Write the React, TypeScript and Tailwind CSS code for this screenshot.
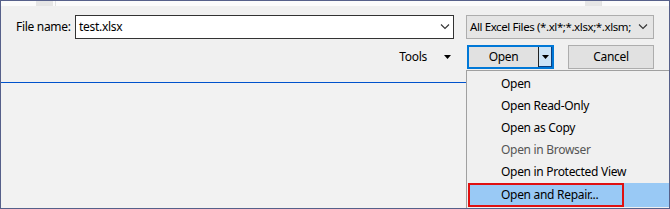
import React from "react";

const Chevron = () => (
  <svg width="10" height="6" viewBox="0 0 10 6" className="shrink-0">
    <path d="M1 0.5 L5 4.5 L9 0.5" fill="none" stroke="#333" strokeWidth="1.1" />
  </svg>
);

const Tri = ({ w = 7 }: { w?: number }) => (
  <svg width={w} height="4" viewBox="0 0 7 4" className="shrink-0">
    <path d="M0 0 H7 L3.5 4 Z" fill="#000" />
  </svg>
);

const items = [
  { t: "Open", dim: false },
  { t: "Open Read-Only", dim: false },
  { t: "Open as Copy", dim: false },
  { t: "Open in Browser", dim: true },
  { t: "Open in Protected View", dim: false },
];

export default function App() {
  return (
    <div className="relative w-[670px] h-[209px] border border-[#56608a] flex flex-col font-['Noto_Sans',sans-serif] text-[12px] tracking-[-0.3px] text-black leading-none overflow-hidden">
      {/* top strip */}
      <div className="h-[5px] bg-[#fbfbfb] flex">
        <div className="ml-[35px] w-[17px] bg-[#e6e6e6]" />
        <div className="ml-[2px] w-px bg-[#e2e2e2]" />
        <div className="ml-[529px] w-[16px] bg-[#e6e6e6]" />
        <div className="w-px bg-[#e2e2e2]" />
      </div>
      {/* panel */}
      <div className="h-[76px] bg-[#f0f0f0] pt-[9px] pl-[15px] pr-[15px] flex flex-col gap-[6px]">
        <div className="flex items-center h-[24px]">
          <div className="w-[59px]">File name:</div>
          <div className="w-[379px] h-[24px] bg-white border border-[#333] flex items-center pl-[3px] pr-[3px]">
            <span className="flex-1">test.xlsx</span>
            <Chevron />
          </div>
          <div className="ml-[12px] w-[188px] h-[24px] bg-[#e5e5e5] border border-[#adadad] flex items-center pl-[3px] pr-[5px]">
            <span className="shrink-0 whitespace-nowrap text-[11.5px] tracking-[-0.4px]">All Excel Files (*.xl*;*.xlsx;*.xlsm;</span>
            <span className="ml-auto"><Chevron /></span>
          </div>
        </div>
        <div className="flex items-center justify-end h-[24px]">
          <div className="flex items-center gap-[17px] mr-[16px]">
            <span>Tools</span>
            <Tri />
          </div>
          <div className="w-[87px] h-[24px] border-2 border-[#0078d7] bg-[#e1e1e1] flex">
            <div className="flex-1 flex items-center justify-center">Open</div>
            <div className="w-px bg-[#222]" />
            <div className="w-[13px] bg-[#cce4f7] border-r border-b border-[#0a3f80] flex items-center justify-center">
              <Tri w={7} />
            </div>
          </div>
          <div className="ml-[14px] w-[86px] h-[24px] bg-[#e1e1e1] border border-[#adadad] flex items-center justify-center">
            Cancel
          </div>
        </div>
      </div>
      <div className="h-px bg-[#0052cc]" />
      <div className="flex-1 bg-[#f2f2f2]" />

      {/* dropdown menu */}
      <div className="absolute left-[465px] top-[69px] right-0 bottom-0 bg-[#f0f0f0] border-l border-t border-[#a0a0a0] pt-[2px] flex flex-col">
        {items.map((it) => (
          <div
            key={it.t}
            className={`h-[22px] flex items-center pl-[34px] ${it.dim ? "text-[#555555]" : "text-black"}`}
          >
            {it.t}
          </div>
        ))}
        <div className="h-[24px] bg-[#99c9f5] ml-px flex">
          <div className="w-[156px] border-2 border-[#e01010] flex items-center pl-[31px]">
            Open and Repair...
          </div>
        </div>
      </div>
    </div>
  );
}
